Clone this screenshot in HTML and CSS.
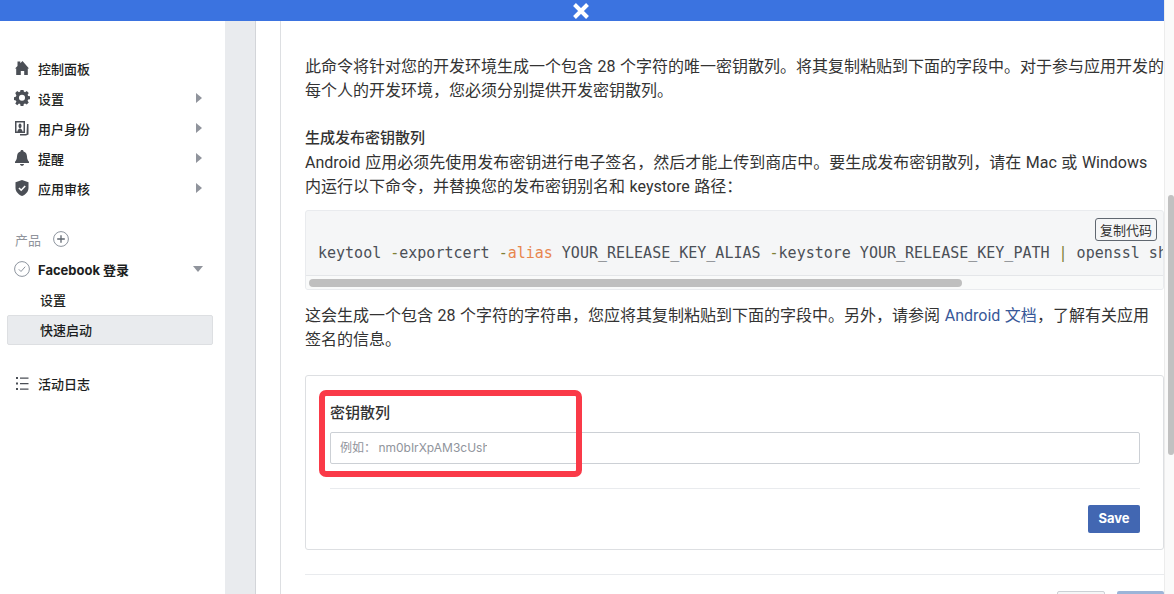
FILE: index.html
```html
<!DOCTYPE html>
<html>
  <head>
    <meta charset="utf-8">
    <title>Facebook 登录 快速启动</title>
    <link rel="stylesheet" href="styles.css">
  </head>
  <body>
    <div class="page">
      <div class="window">
        <div class="topbar">
          <svg class="close-icon" viewBox="0 0 18 18" width="18" height="18"><path d="M2.5 2.5l13 13M15.5 2.5l-13 13" stroke="#fff" stroke-width="4" fill="none"/></svg>
        </div>
        <div class="columns">
          <nav class="sidebar">
            <a class="nav-item">
              <svg class="nav-icon" viewBox="0 0 16 16"><path d="M1 8.500l2.500-2.500V1.500h2.800v1.800L8.500 1 15 8.500h-1.200V15h-3.600v-4H6.800v4H2.200V8.500z" fill="#4b4f56"/></svg>
              <span>控制面板</span>
            </a>
            <a class="nav-item">
              <svg class="nav-icon" viewBox="0 0 16 16"><path fill-rule="evenodd" d="M6.500 0h3l.4 2.100 1.300.6L13 1.500l2.100 2.100-1.200 1.800.6 1.300 2.100.4v3l-2.100.4-.6 1.300 1.200 1.800-2.100 2.100-1.800-1.200-1.300.6-.4 2.100h-3l-.4-2.100-1.300-.6L3 16.600.9 14.500l1.200-1.800-.6-1.300L-.6 11V8l2.100-.4.6-1.300L.9 3.600 3 1.500l1.800 1.200 1.300-.6zM8 5.300a3.200 3.200 0 100 6.400 3.200 3.200 0 000-6.400z" transform="translate(.4 -.4) scale(.95)" fill="#4b4f56"/></svg>
              <span>设置</span>
              <i class="arrow-right"></i>
            </a>
            <a class="nav-item">
              <svg class="nav-icon" viewBox="0 0 16 16"><path fill-rule="evenodd" d="M1 1h10v12H1zM2.500 2.500v9h1c.2-2 1-2.500 2.500-3-1-.5-1.500-1.300-1.500-2.500S5 3.500 6 3.500 7.500 4.800 7.500 6 7 8 6 8.500c1.500.5 2.300 1 2.500 3h1v-9z" fill="#4b4f56"/><path d="M13 4h1.500v10.500L12 15.500H6V14h6.500z" fill="#4b4f56"/></svg>
              <span>用户身份</span>
              <i class="arrow-right"></i>
            </a>
            <a class="nav-item">
              <svg class="nav-icon" viewBox="0 0 16 16"><path d="M8 0c1 0 1.500.6 1.500 1.400C12 2 12.800 4 13 6.500c.1 2.500.8 4 2 5.300V13H1v-1.200c1.200-1.300 1.900-2.800 2-5.300C3.200 4 4 2 6.500 1.400 6.500.6 7 0 8 0zM6 14h4c0 1-1 1.800-2 1.800S6 15 6 14z" fill="#4b4f56"/></svg>
              <span>提醒</span>
              <i class="arrow-right"></i>
            </a>
            <a class="nav-item">
              <svg class="nav-icon" viewBox="0 0 16 16"><path d="M8 0l6.500 2.200V8c0 3.700-2.800 6.500-6.500 8-3.700-1.500-6.500-4.300-6.500-8V2.200z" fill="#4b4f56"/><path d="M5 8l2.200 2.200L11.200 6" stroke="#fff" stroke-width="1.600" fill="none"/></svg>
              <span>应用审核</span>
              <i class="arrow-right"></i>
            </a>

            <div class="products-head">
              <span>产品</span>
              <svg viewBox="0 0 16 16" width="16" height="16"><circle cx="8" cy="8" r="7.400" fill="none" stroke="#8d949e"/><path d="M8 4.200v7.600M4.200 8h7.600" stroke="#606770" stroke-width="1.300"/></svg>
            </div>
            <a class="nav-item product-item">
              <svg class="nav-icon" viewBox="0 0 16 16"><circle cx="8" cy="8" r="7.400" fill="none" stroke="#8d949e"/><path d="M4.800 8.300l2.200 2.200 4.200-4.800" stroke="#8d949e" fill="none"/></svg>
              <span>Facebook 登录</span>
              <i class="arrow-down"></i>
            </a>
            <a class="sub-item">设置</a>
            <a class="sub-item active">快速启动</a>

            <a class="nav-item log-item">
              <svg class="nav-icon" viewBox="0 0 16 16"><path d="M2 2h2v2H2zM2 7.500h2v2H2zM2 13h2v2H2z" fill="#4b4f56"/><path d="M6 2.500h8.500v1.200H6zM6 8h8.500v1.200H6zM6 13.500h8.500v1.200H6z" fill="#4b4f56"/></svg>
              <span>活动日志</span>
            </a>
          </nav>

          <div class="gutter"></div>

          <main class="content">
            <p class="intro">此命令将针对您的开发环境生成一个包含 28 个字符的唯一密钥散列。将其复制粘贴到下面的字段中。对于参与应用开发的每个人的开发环境，您必须分别提供开发密钥散列。</p>

            <h4>生成发布密钥散列</h4>
            <p class="tight">Android 应用必须先使用发布密钥进行电子签名，然后才能上传到商店中。要生成发布密钥散列，请在 Mac 或 Windows 内运行以下命令，并替换您的发布密钥别名和 keystore 路径：</p>

            <div class="code-box">
              <button class="copy-btn">复制代码</button>
              <pre>keytool <b>-</b>exportcert <b>-</b><em>alias</em> YOUR_RELEASE_KEY_ALIAS <b>-</b>keystore YOUR_RELEASE_KEY_PATH <b>|</b> openssl sha1 -binary | openssl base64</pre>
              <div class="code-scroll"><div class="code-thumb"></div></div>
            </div>

            <p class="after-code">这会生成一个包含 28 个字符的字符串，您应将其复制粘贴到下面的字段中。另外，请参阅 <a class="link">Android 文档</a>，了解有关应用签名的信息。</p>

            <section class="card">
              <label class="field-label">密钥散列</label>
              <div class="field"><span class="placeholder">例如： nm0bIrXpAM3cUsh4</span></div>
              <div class="card-footer">
                <button class="save-btn">Save</button>
              </div>
              <div class="highlight"></div>
            </section>

            <div class="page-footer">
              <button class="ghost-btn"></button>
              <button class="next-btn"></button>
            </div>
          </main>
        </div>
      </div>
      <div class="scrollbar"><div class="scroll-thumb"></div></div>
    </div>
  </body>
</html>
```

FILE: styles.css
```css
:root {
  --text-color: #1c1e21;
  --icon-color: #4b4f56;
  --panel-grey: #e9ebee;
  --line-color: #dddfe2;
  --cjk-font: Inter, 'Noto Sans CJK SC', sans-serif;
}

html, body {
  margin: 0;
  height: 100%;
  overflow: hidden;
  background: #fff;
}

.page {
  display: flex;
  height: 594px;
  font-family: var(--cjk-font);
  color: var(--text-color);
}

.window {
  width: 1164px;
  display: flex;
  flex-direction: column;
  overflow: hidden;
}

.topbar {
  height: 21px;
  flex: none;
  background: #3b73e0;
  display: flex;
  justify-content: center;
  align-items: center;
  padding-right: 2px;
}

.columns {
  flex: 1;
  display: flex;
  min-height: 0;
}

/* sidebar */
.sidebar {
  width: 225px;
  flex: none;
  box-sizing: border-box;
  padding: 32px 12px 0 7px;
  font-size: 13px;
  font-weight: 500;
}

.nav-item {
  height: 30px;
  display: flex;
  align-items: center;
  padding-left: 7px;
  position: relative;
}

.nav-icon {
  width: 16px;
  height: 16px;
  flex: none;
  margin-right: 8px;
}

.arrow-right {
  position: absolute;
  left: 189px;
  top: 10px;
  border-left: 6px solid #90949c;
  border-top: 5px solid transparent;
  border-bottom: 5px solid transparent;
}

.arrow-down {
  position: absolute;
  left: 186px;
  top: 12px;
  border-top: 6px solid #90949c;
  border-left: 5px solid transparent;
  border-right: 5px solid transparent;
}

.products-head {
  height: 30px;
  margin-top: 21px;
  padding-left: 8px;
  display: flex;
  align-items: center;
  gap: 12px;
  color: #90949c;
  font-weight: 400;
}

.product-item {
  font-weight: 700;
}

.sub-item {
  height: 30px;
  box-sizing: border-box;
  padding-left: 33px;
  display: flex;
  align-items: center;
}

.sub-item.active {
  margin-top: 1px;
  padding: 0 0 2px 32px;
  background: var(--panel-grey);
  border: 1px solid var(--line-color);
  border-radius: 2px;
}

.log-item {
  margin-top: 23px;
}

.gutter {
  width: 31px;
  flex: none;
  box-sizing: border-box;
  background: var(--panel-grey);
  border-right: 1px solid #d3d5d9;
}

/* main column */
.content {
  flex: 1;
  min-width: 0;
  margin-left: 24px;
  border-left: 1px solid var(--line-color);
  padding: 34px 0 0 24px;
  font-family: Roboto, 'Noto Sans CJK SC', sans-serif;
  font-size: 16px;
  line-height: 24px;
  word-spacing: 0.6px;
  color: #333;
}

.content p {
  margin: 0 0 23px;
}

.content p.intro {
  margin-right: -2px;
}

.content h4 {
  margin: 0 0 1px;
  font-size: 15px;
  font-weight: 500;
}

.content p.tight {
  margin-bottom: 11px;
}

.code-box {
  position: relative;
  height: 80px;
  box-sizing: border-box;
  background: #f5f6f7;
  border: 1px solid #e9ebee;
  border-radius: 3px;
  display: flex;
  flex-direction: column;
  overflow: hidden;
}

.code-box pre {
  flex: 1;
  margin: 0;
  padding: 30px 0 0 12px;
  font-family: 'DejaVu Sans Mono', monospace;
  font-size: 15px;
  line-height: 24px;
  word-spacing: 0;
  color: #4b4f56;
  white-space: pre;
  overflow: hidden;
}

.code-box b {
  font-weight: 400;
  color: #7f7f35;
}

.code-box em {
  font-style: normal;
  color: #e8864f;
}

.code-scroll {
  height: 14px;
  flex: none;
  box-sizing: border-box;
  border-top: 1px solid #e4e6e9;
  padding: 3px 0 0 3px;
  background: #f9fafa;
}

.code-thumb {
  width: 653px;
  height: 8px;
  border-radius: 4px;
  background: #bfbfbf;
}

.copy-btn {
  position: absolute;
  top: 7px;
  right: 6px;
  width: 62px;
  height: 23px;
  padding: 0;
  background: #f5f6f7;
  border: 1px solid #606770;
  border-radius: 3px;
  font-family: var(--cjk-font);
  font-size: 13px;
  color: #333;
}

.content p.after-code {
  margin-top: 14px;
}

.link {
  color: #385898;
}

.card {
  position: relative;
  height: 175px;
  box-sizing: border-box;
  padding: 25px 23px 0 24px;
  border: 1px solid var(--line-color);
  border-radius: 3px;
}

.field-label {
  display: block;
  font-size: 15px;
  font-weight: 500;
  line-height: 24px;
  margin-bottom: 7px;
}

.field {
  height: 32px;
  box-sizing: border-box;
  border: 1px solid #ccd0d5;
  border-radius: 2px;
  padding-left: 9px;
  display: flex;
  align-items: center;
}

.placeholder {
  width: 147px;
  overflow: hidden;
  white-space: nowrap;
  font-family: var(--cjk-font);
  font-size: 12px;
  word-spacing: -1px;
  color: #90949c;
}

.card-footer {
  margin-top: 24px;
  padding-top: 16px;
  border-top: 1px solid #e9ebee;
  display: flex;
  justify-content: flex-end;
}

.save-btn {
  width: 52px;
  height: 28px;
  padding: 0 0 2px;
  border: 0;
  border-radius: 2px;
  background: #4267b2;
  color: #fff;
  font-family: var(--cjk-font);
  font-size: 13px;
  font-weight: 700;
}

/* red annotation drawn over the screenshot */
.highlight {
  position: absolute;
  left: 13px;
  top: 14px;
  width: 263px;
  height: 87px;
  box-sizing: border-box;
  border: 6px solid #fa3a48;
  border-radius: 7px;
}

.page-footer {
  margin-top: 24px;
  border-top: 1px solid #e9ebee;
  padding-top: 16px;
  display: flex;
  justify-content: flex-end;
  gap: 12px;
}

.ghost-btn,
.next-btn {
  height: 28px;
  padding: 0;
  border-radius: 2px;
}

.ghost-btn {
  width: 48px;
  background: #f5f6f7;
  border: 1px solid #ccd0d5;
}

.next-btn {
  width: 47px;
  background: #9cb4d8;
  border: 0;
}

/* page scrollbar */
.scrollbar {
  width: 10px;
  flex: none;
  box-sizing: border-box;
  background: #fafafa;
  border-left: 1px solid #ececec;
  padding: 195px 0 0 3px;
}

.scroll-thumb {
  height: 260px;
  border-radius: 3px;
  background: #c1c1c1;
}
```
